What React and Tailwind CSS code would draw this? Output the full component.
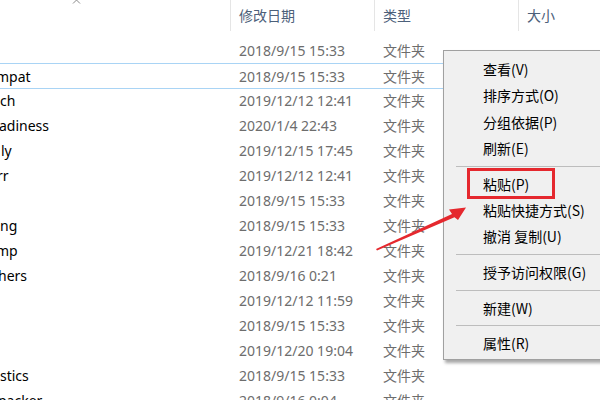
import React from 'react';

const rows = [
  { name: '', offset: 'ml-0', date: '2018/9/15 15:33' },
  { name: 'mpat', offset: 'ml-[-4px]', date: '2018/9/15 15:33', hover: true },
  { name: 'ch', offset: 'ml-0', date: '2019/12/12 12:41' },
  { name: 'adiness', offset: 'ml-[-1px]', date: '2020/1/4 22:43' },
  { name: 'ly', offset: 'ml-[1px]', date: '2019/12/15 17:45' },
  { name: 'rr', offset: 'ml-[-3px]', date: '2019/12/12 12:41' },
  { name: '', offset: 'ml-0', date: '2018/9/15 15:33' },
  { name: 'ng', offset: 'ml-0', date: '2018/9/15 15:33' },
  { name: 'mp', offset: 'ml-[-4px]', date: '2019/12/21 18:42' },
  { name: 'hers', offset: 'ml-[-2px]', date: '2018/9/16 0:21' },
  { name: '', offset: 'ml-0', date: '2019/12/12 11:59' },
  { name: '', offset: 'ml-0', date: '2018/9/15 15:33' },
  { name: '', offset: 'ml-0', date: '2019/12/20 19:04' },
  { name: 'stics', offset: 'ml-0', date: '2018/9/15 15:33' },
  { name: 'packer', offset: 'ml-[-2px]', date: '2018/9/16 0:04' },
];

const menu = [
  '查看(V)', '排序方式(O)', '分组依据(P)', '刷新(E)', '-',
  '粘贴(P)', '粘贴快捷方式(S)', '撤消 复制(U)', '-',
  '授予访问权限(G)', '-',
  '新建(W)', '-',
  '属性(R)',
];

export default function App() {
  return (
    <div className="relative w-[600px] h-[400px] overflow-hidden bg-white font-['Noto_Sans','Noto_Sans_CJK_SC',sans-serif] text-[14px]">
      {/* column header */}
      <div className="relative flex h-[31px] text-[#4c607a]">
        <div className="w-[231px] border-r border-[#e5e5e5]" />
        <div className="w-[144px] pl-[8px] flex items-center border-r border-[#e5e5e5]">修改日期</div>
        <div className="w-[144px] pl-[8px] flex items-center border-r border-[#e5e5e5]">类型</div>
        <div className="flex-1 pl-[8px] flex items-center">大小</div>
        <svg className="absolute left-[72px] top-[-2px]" width="9" height="7" viewBox="0 0 9 7">
          <path d="M1 5.5 L4.5 2 L8 5.5" fill="none" stroke="#8a8a8a" strokeWidth="1" />
        </svg>
      </div>

      {/* rows */}
      <div className="mt-[7px] flex flex-col">
        {rows.map((r, i) => (
          <div
            key={i}
            className={`flex items-center shrink-0 ${r.hover ? 'h-[26px] -mb-px border-y border-[#a9d4f5]' : 'h-[25px]'}`}
          >
            <div className="w-[231px] overflow-hidden whitespace-nowrap text-black">
              <span className={`inline-block ${r.offset}`}>{r.name}</span>
            </div>
            <div className="w-[144px] pl-[8px] text-[#6d6d6d] whitespace-nowrap">{r.date}</div>
            <div className="w-[144px] pl-[8px] text-[#6d6d6d] font-['Noto_Sans_CJK_SC',sans-serif]">文件夹</div>
          </div>
        ))}
      </div>

      {/* context menu */}
      <div className="absolute left-[443px] top-[50px] right-[-40px] bg-[#f0f0f0] border border-[#a0a0a0] shadow-[2px_3px_3px_rgba(0,0,0,0.35)] pt-[5.5px] pb-[2px] text-black font-['Noto_Sans_CJK_SC',sans-serif] text-[14px]">
        {menu.map((m, i) =>
          m === '-' ? (
            <div key={i} className="h-[9.5px] pl-[12px] pt-[4px]">
              <div className="h-px bg-[#bdbdbd]" />
            </div>
          ) : (
            <div key={i} className="h-[26.25px] pl-[39px] flex items-center whitespace-nowrap">{m}</div>
          )
        )}
      </div>

      {/* annotation */}
      <div className="absolute left-[467px] top-[168px] w-[88px] h-[31px] border-[3px] border-[#e5282e]" />
      <svg className="absolute left-0 top-0 pointer-events-none" width="600" height="400" viewBox="0 0 600 400">
        <polygon
          points="376,249 452,214 449,209.5 466,207.5 458,220 454.5,217.2 377,250.5"
          fill="#e5282e"
        />
      </svg>
    </div>
  );
}
